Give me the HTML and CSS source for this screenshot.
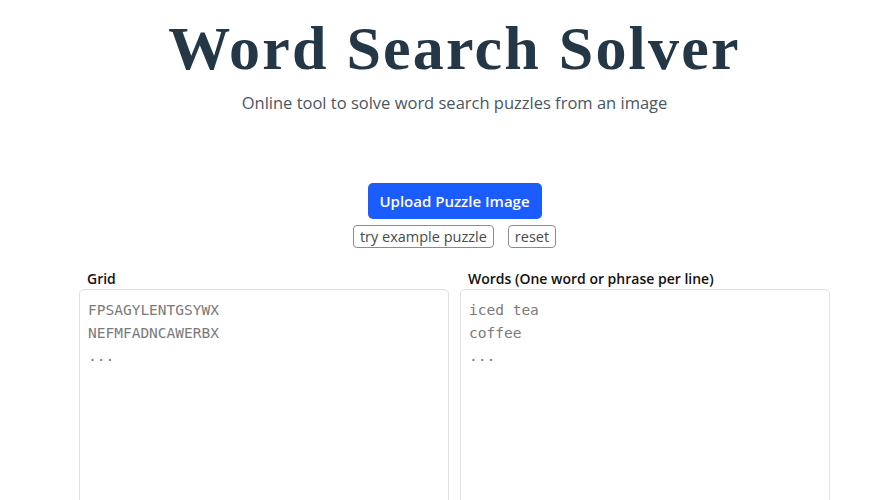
FILE: index.html
```html
<!DOCTYPE html>
<html>
<head>
<meta charset="utf-8">
<link rel="stylesheet" href="styles.css">
</head>
<body>
<div class="page">
  <header class="hero">
    <h1 class="title">Word Search Solver</h1>
    <p class="subtitle">Online tool to solve word search puzzles from an image</p>
  </header>
  <section class="actions">
    <button class="upload">Upload Puzzle Image</button>
    <div class="small-actions">
      <button class="small">try example puzzle</button>
      <button class="small">reset</button>
    </div>
  </section>
  <section class="inputs">
    <div class="field">
      <label class="label">Grid</label>
      <textarea class="box" placeholder="FPSAGYLENTGSYWX&#10;NEFMFADNCAWERBX&#10;..."></textarea>
    </div>
    <div class="field">
      <label class="label">Words (One word or phrase per line)</label>
      <textarea class="box" placeholder="iced tea&#10;coffee&#10;..."></textarea>
    </div>
  </section>
</div>
</body>
</html>
```
FILE: styles.css
```css
html, body {
  margin: 0;
  padding: 0;
  background: #ffffff;
}
body {
  font-family: "Open Sans", "Noto Sans", sans-serif;
  overflow: hidden;
}
.page {
  padding: 0 32px 0 55px;
}
.hero {
  text-align: center;
}
.title {
  margin: 0;
  padding-top: 12px;
  font-family: "Liberation Serif", serif;
  font-weight: 700;
  font-size: 62px;
  line-height: 72px;
  color: #243746;
  letter-spacing: 2.2px;
}
.subtitle {
  margin: 8px 0 0;
  font-size: 16.5px;
  line-height: 22px;
  color: #4b5661;
}
.actions {
  display: flex;
  flex-direction: column;
  align-items: center;
  margin-top: 69px;
}
.upload {
  width: 174px;
  height: 36px;
  border: none;
  border-radius: 5px;
  background: #1b5cff;
  color: #fff;
  font-family: "Open Sans", sans-serif;
  font-weight: 600;
  font-size: 15px;
  padding: 0;
}
.small-actions {
  display: flex;
  gap: 14px;
  margin-top: 6px;
}
.small {
  height: 23px;
  padding: 0 6px;
  border: 1px solid #8c8c8c;
  border-radius: 4px;
  background: #fff;
  color: #4a4a4a;
  font-family: "Open Sans", sans-serif;
  font-size: 14.5px;
  font-weight: 500;
  line-height: 20px;
}
.inputs {
  width: 751px;
  margin: 21px auto 0;
  display: grid;
  grid-template-columns: 1fr 1fr;
  gap: 11px;
}
.field {
  display: flex;
  flex-direction: column;
}
.label {
  padding-left: 8px;
  font-size: 14px;
  font-weight: 600;
  line-height: 20px;
  color: #111;
  margin-bottom: 0;
}
.box {
  height: 260px;
  resize: none;
  border: 1px solid #e2e2e2;
  border-radius: 5px;
  padding: 9px 8px 7px;
  font-family: "DejaVu Sans Mono", monospace;
  font-size: 14.5px;
  line-height: 23px;
  color: #333;
  outline: none;
}
.box::placeholder {
  color: #7a7a7a;
}
```
